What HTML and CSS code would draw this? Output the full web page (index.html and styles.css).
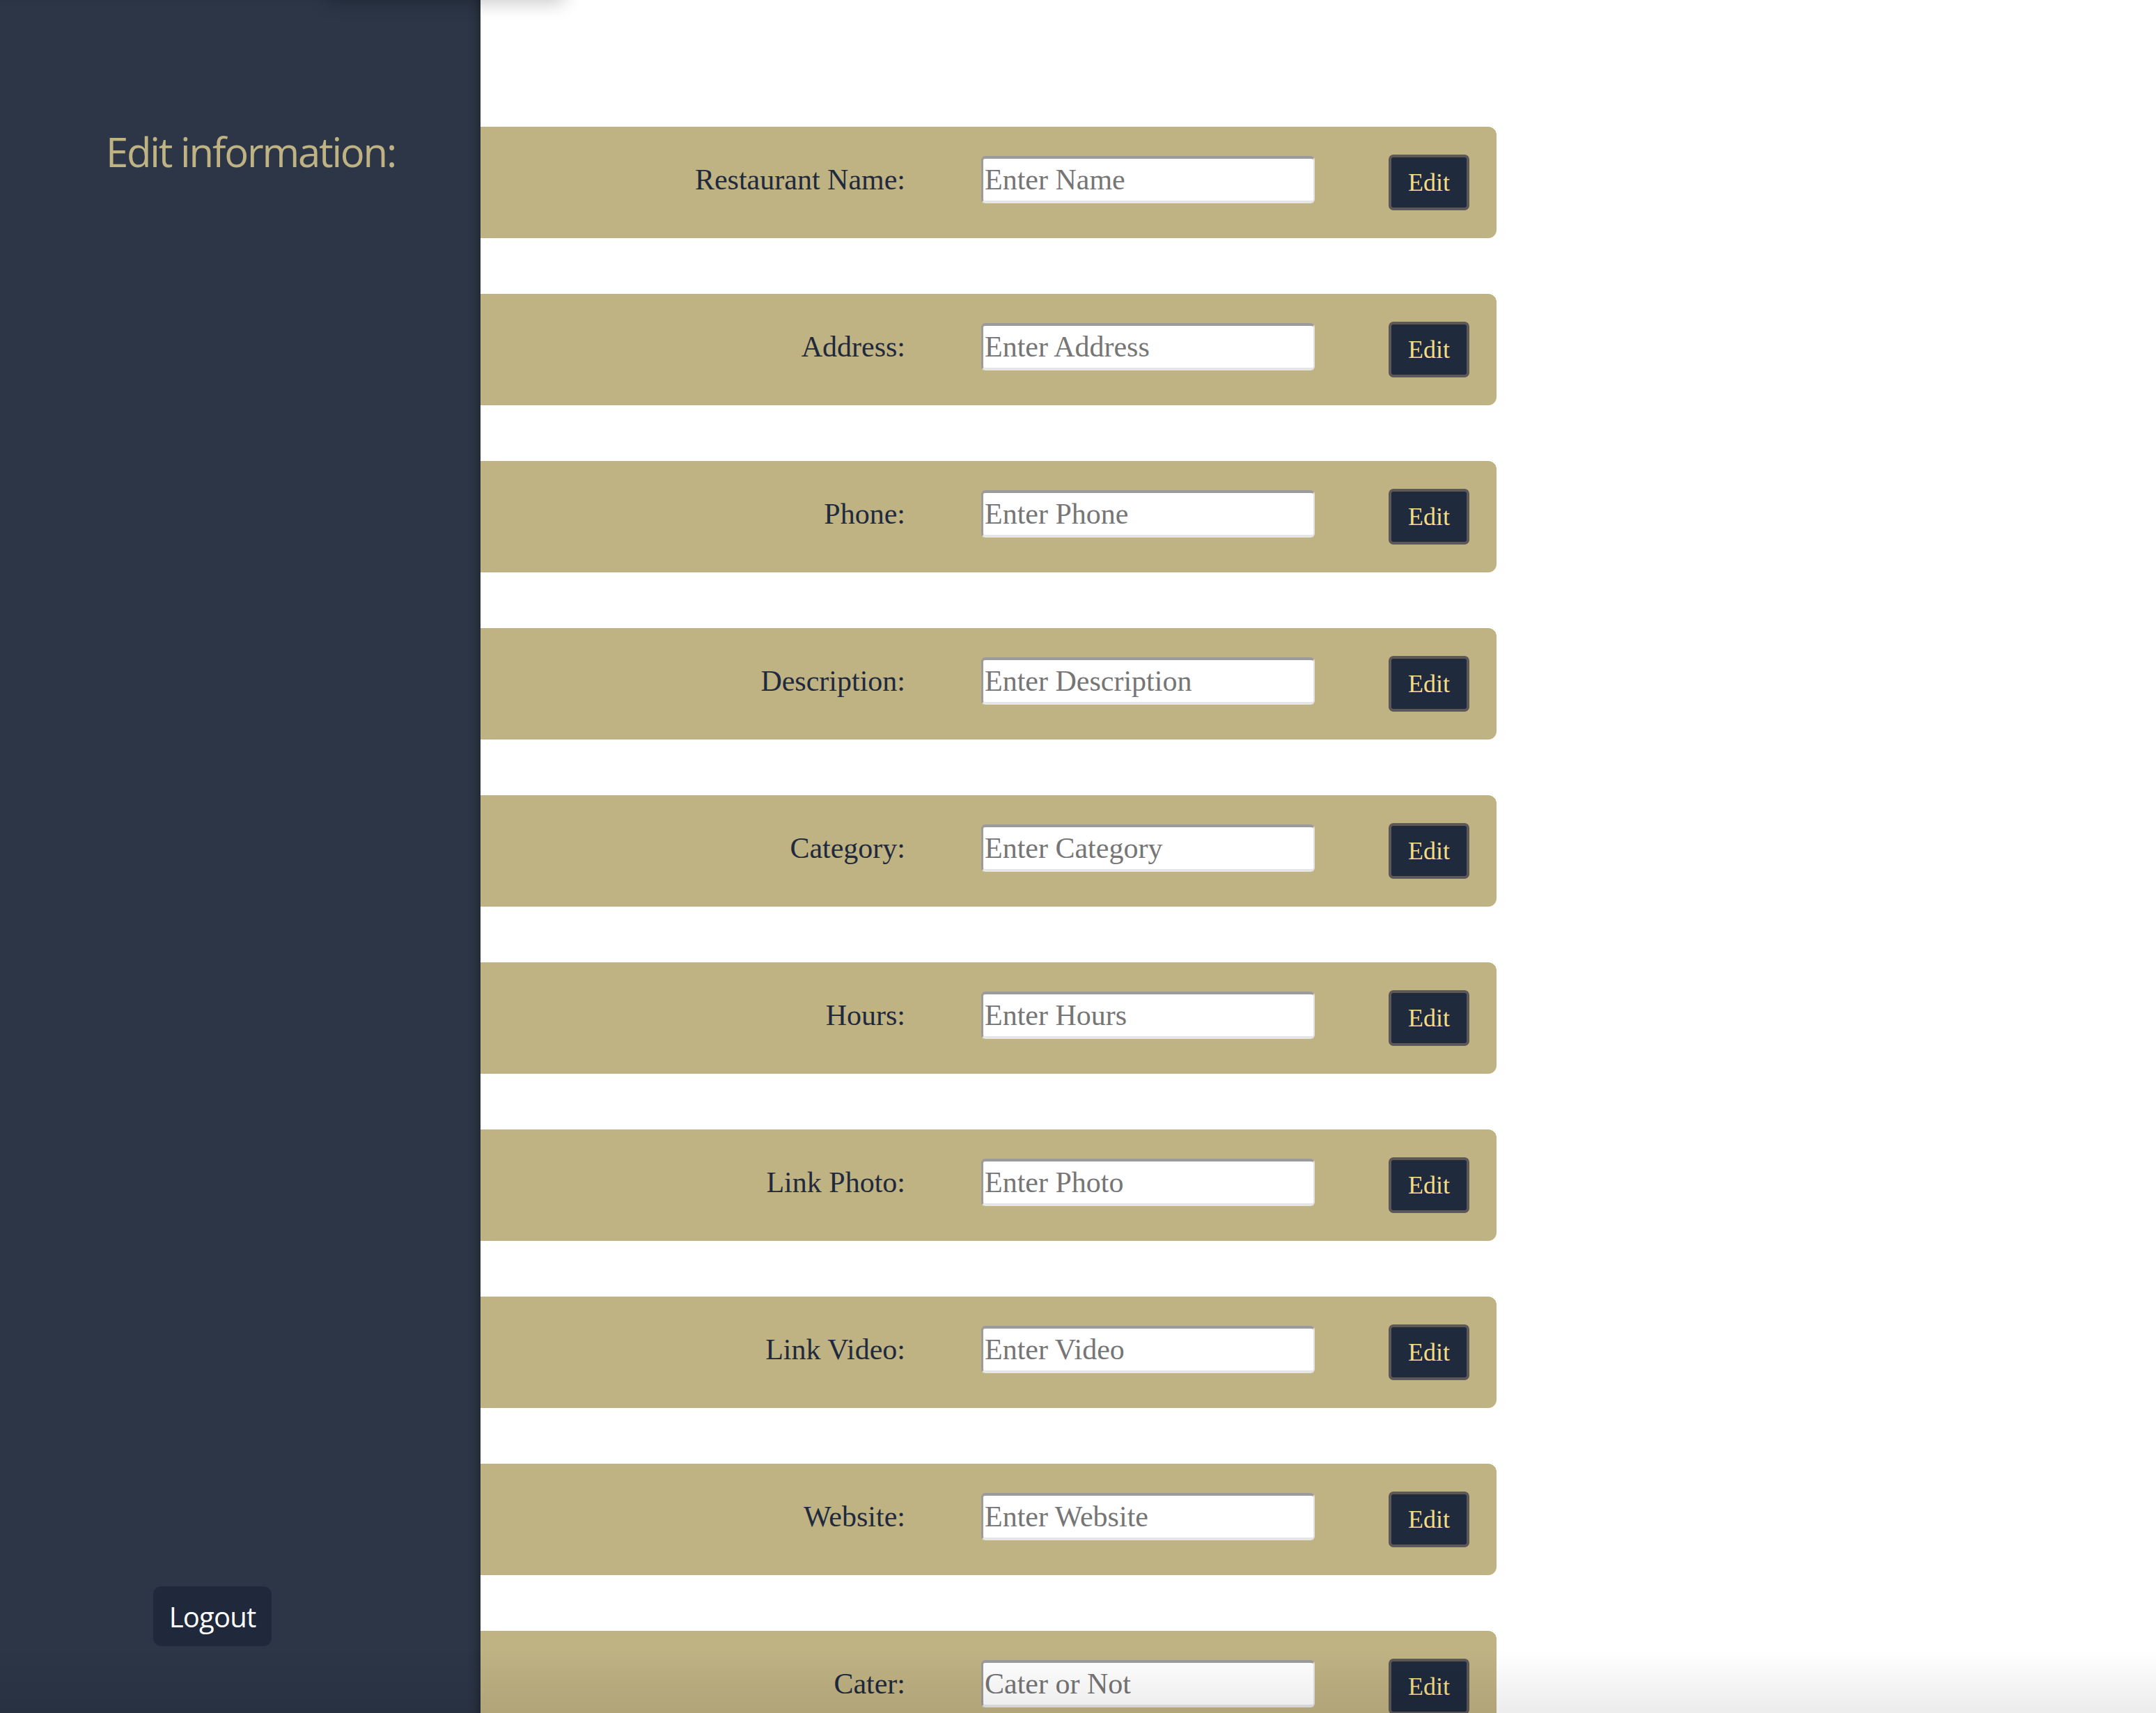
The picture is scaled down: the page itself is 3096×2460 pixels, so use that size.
FILE: index.html
```html
<!DOCTYPE html>
<html lang="en">
<head>
<meta charset="utf-8">
<title>Edit information</title>
<link rel="stylesheet" href="styles.css">
</head>
<body>
<div class="top-shade"></div>
<aside class="sidebar">
  <h1 class="side-title">Edit information:</h1>
  <button class="logout" type="button">Logout</button>
</aside>
<main class="content">
  <div class="field-card"><label class="field-label">Restaurant Name:</label><input class="field-input" placeholder="Enter Name"><button class="edit-btn" type="button">Edit</button></div>
  <div class="field-card"><label class="field-label">Address:</label><input class="field-input" placeholder="Enter Address"><button class="edit-btn" type="button">Edit</button></div>
  <div class="field-card"><label class="field-label">Phone:</label><input class="field-input" placeholder="Enter Phone"><button class="edit-btn" type="button">Edit</button></div>
  <div class="field-card"><label class="field-label">Description:</label><input class="field-input" placeholder="Enter Description"><button class="edit-btn" type="button">Edit</button></div>
  <div class="field-card"><label class="field-label">Category:</label><input class="field-input" placeholder="Enter Category"><button class="edit-btn" type="button">Edit</button></div>
  <div class="field-card"><label class="field-label">Hours:</label><input class="field-input" placeholder="Enter Hours"><button class="edit-btn" type="button">Edit</button></div>
  <div class="field-card"><label class="field-label">Link Photo:</label><input class="field-input" placeholder="Enter Photo"><button class="edit-btn" type="button">Edit</button></div>
  <div class="field-card"><label class="field-label">Link Video:</label><input class="field-input" placeholder="Enter Video"><button class="edit-btn" type="button">Edit</button></div>
  <div class="field-card"><label class="field-label">Website:</label><input class="field-input" placeholder="Enter Website"><button class="edit-btn" type="button">Edit</button></div>
  <div class="field-card"><label class="field-label">Cater:</label><input class="field-input" placeholder="Cater or Not"><button class="edit-btn" type="button">Edit</button></div>
</main>
<div class="bottom-fade"></div>
</body>
</html>
```
FILE: styles.css
```css
html, body {
  margin: 0;
  padding: 0;
  height: 100%;
}
body {
  display: flex;
  align-items: flex-start;
  background: #ffffff;
  overflow: hidden;
  font-family: "Liberation Serif", "Times New Roman", serif;
}
.sidebar {
  flex: 0 0 690px;
  width: 690px;
  height: 100vh;
  box-sizing: border-box;
  background: #2c3647;
  box-shadow: inset -12px 0 14px -8px rgba(0, 0, 0, 0.3);
  display: flex;
  flex-direction: column;
  justify-content: space-between;
  align-items: flex-start;
  padding: 0 0 96px 0;
  position: relative;
  z-index: 2;
}
.side-title {
  margin: 176px 0 0 152px;
  font-family: "Open Sans", "Noto Sans", sans-serif;
  font-weight: 400;
  font-size: 58px;
  letter-spacing: -2.2px;
  line-height: 84px;
  color: #bfb283;
}
.logout {
  margin-left: 220px;
  width: 170px;
  height: 86px;
  border: none;
  border-radius: 12px;
  background: #1f293b;
  color: #ffffff;
  font-family: "Open Sans", "Noto Sans", sans-serif;
  font-size: 40px;
  letter-spacing: -0.8px;
  padding: 0;
}
.content {
  flex: 0 0 1459px;
  width: 1459px;
  padding-top: 182px;
  display: flex;
  flex-direction: column;
  gap: 80px;
}
.field-card {
  height: 160px;
  box-sizing: border-box;
  background: #bfb283;
  border-radius: 0 12px 12px 0;
  display: flex;
  align-items: center;
  justify-content: flex-end;
  padding-right: 39px;
}
.field-label {
  font-size: 42px;
  line-height: 42px;
  color: #1f2a3d;
  margin-right: 109px;
  margin-bottom: 8px;
}
.field-input {
  width: 479px;
  height: 68px;
  box-sizing: border-box;
  margin: 0 106px 8px 0;
  padding: 0 0 0 2px;
  border-style: solid;
  border-width: 4px 2px 4px 3px;
  border-color: #9b9b9b #e4e4e4 #e6e6e6 #9b9b9b;
  border-radius: 6px;
  background: #ffffff;
  font-family: "Liberation Serif", "Times New Roman", serif;
  font-size: 42px;
  color: #222;
  outline: none;
}
.field-input::placeholder {
  color: #767676;
}
.edit-btn {
  width: 116px;
  height: 80px;
  box-sizing: border-box;
  border: 4px solid #5c5858;
  border-radius: 7px;
  background: #1f2a3d;
  color: #f3dc86;
  font-family: "Liberation Serif", "Times New Roman", serif;
  font-size: 36px;
  padding: 0;
}
.top-shade {
  position: fixed;
  top: -40px;
  left: 470px;
  width: 340px;
  height: 40px;
  box-shadow: 0 4px 26px rgba(0, 0, 0, 0.22);
  z-index: 3;
}
.bottom-fade {
  position: fixed;
  left: 0;
  right: 0;
  bottom: 0;
  height: 90px;
  background: linear-gradient(to bottom, rgba(0, 0, 0, 0), rgba(0, 0, 0, 0.075));
  pointer-events: none;
  z-index: 4;
}
```
